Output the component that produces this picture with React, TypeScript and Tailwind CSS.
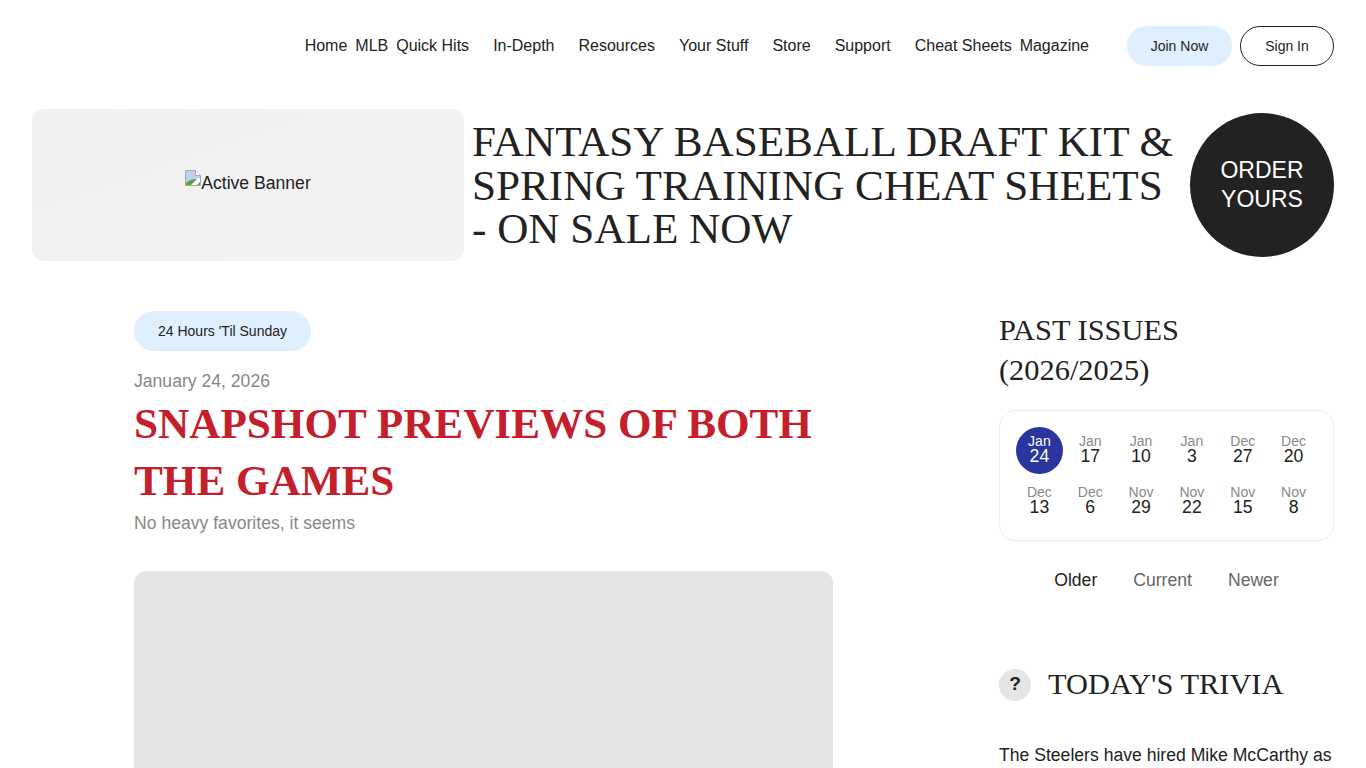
import React from 'react';

const sans = { fontFamily: '"Liberation Sans", Arial, sans-serif' };

const navItems = [
  { label: 'Home', cls: '' },
  { label: 'MLB', cls: '' },
  { label: 'Quick Hits', cls: 'pr-4' },
  { label: 'In-Depth', cls: 'pr-4' },
  { label: 'Resources', cls: 'pr-4' },
  { label: 'Your Stuff', cls: 'pr-4' },
  { label: 'Store', cls: 'pr-4' },
  { label: 'Support', cls: 'pr-4' },
  { label: 'Cheat Sheets', cls: '' },
  { label: 'Magazine', cls: '' },
];

const issues = [
  ['Jan', '24'],
  ['Jan', '17'],
  ['Jan', '10'],
  ['Jan', '3'],
  ['Dec', '27'],
  ['Dec', '20'],
  ['Dec', '13'],
  ['Dec', '6'],
  ['Nov', '29'],
  ['Nov', '22'],
  ['Nov', '15'],
  ['Nov', '8'],
];

// the browser's broken image glyph
const BrokenImage = () => (
  <svg width="16" height="16" viewBox="0 0 16 16" className="inline-block align-[3px]">
    <path d="M0.5 0.5H10.5L15.5 5.5V15.5H0.5Z" fill="#fff" stroke="#a8a8a8" />
    <path d="M10.5 0.5V5.5H15.5" fill="#fff" stroke="#a8a8a8" />
    <path d="M1 1H10V6H15V8.5C10 8 5 9 1 13Z" fill="#bcd0f4" />
    <path d="M1 15V13C4 10 8 8.5 12 9L6 15Z" fill="#5f9e3c" />
    <path d="M12 15L15 12V15Z" fill="#5f9e3c" />
  </svg>
);

export default function App() {
  return (
    <div className="h-[768px] overflow-hidden bg-white text-[#222]" style={sans}>
      {/* Header */}
      <header className="flex items-center justify-end gap-[38px] px-8 pt-[26px]">
        <nav className="flex items-center gap-2">
          {navItems.map((item) => (
            <a key={item.label} className={`text-base text-[#222] ${item.cls}`}>
              {item.label}
            </a>
          ))}
        </nav>
        <div className="flex items-center gap-2">
          <button className="h-10 w-[105px] rounded-full bg-[#e0effd] text-sm text-[#222]">Join Now</button>
          <button className="h-10 w-[94px] rounded-full border border-[#222] text-sm text-[#222]">Sign In</button>
        </div>
      </header>

      {/* Banner */}
      <section className="mt-[43px] flex items-center px-8">
        <div className="flex h-[152px] w-[432px] shrink-0 items-center justify-center rounded-xl bg-gradient-to-br from-[#f0f0f0] to-[#f3f3f3] pb-1 text-[17.6px]">
          <span>
            <BrokenImage />
            Active Banner
          </span>
        </div>
        <h2 className="ml-2 w-[710px] shrink-0 pt-px font-['Liberation_Serif',serif] text-[43.2px] leading-[43.5px] text-[#222]">
          FANTASY BASEBALL DRAFT KIT &amp; SPRING TRAINING CHEAT SHEETS - ON SALE NOW
        </h2>
        <a className="ml-auto flex size-36 shrink-0 items-center justify-center rounded-full bg-[#222] text-center text-[23px] leading-[29px] text-white">
          ORDER
          <br />
          YOURS
        </a>
      </section>

      {/* Main */}
      <div className="mt-[50px] flex pl-[134px] pr-8">
        <main className="w-[699px] shrink-0">
          <span className="inline-flex h-10 w-[177px] items-center justify-center rounded-full bg-[#e0effd] text-sm text-[#222]">
            24 Hours 'Til Sunday
          </span>
          <p className="mt-[9px] text-[17.6px] leading-[42px] text-[#888]">January 24, 2026</p>
          <h1 className="-mt-[6px] font-['Liberation_Serif',serif] text-[43.2px] leading-[56.5px] font-bold text-[#c4202b]">
            SNAPSHOT PREVIEWS OF BOTH THE GAMES
          </h1>
          <p className="pt-px text-[17.6px] leading-[27px] text-[#888]">No heavy favorites, it seems</p>
          <div className="mt-[34px] h-[400px] rounded-xl bg-[#e5e5e5]" />
        </main>

        <aside className="-mt-px ml-auto w-[335px] shrink-0">
          <h3 className="font-['Liberation_Serif',serif] text-[30.4px] leading-10 text-[#222]">
            PAST ISSUES (2026/2025)
          </h3>
          <div className="mt-5 rounded-2xl border border-[#eee] px-[14px] pt-4 pb-[15px]">
            <div className="grid grid-cols-6 gap-y-1">
              {issues.map(([month, day], i) => (
                <a
                  key={`${month}${day}`}
                  className={`flex size-[47px] flex-col items-center justify-center justify-self-center rounded-full pb-1 ${
                    i === 0 ? 'bg-[#2a359f] text-white' : ''
                  }`}
                >
                  <span className={`text-sm leading-[14px] ${i === 0 ? 'text-white' : 'text-[#888]'}`}>{month}</span>
                  <span className={`text-[17.6px] leading-[16px] ${i === 0 ? 'text-white' : 'text-[#222]'}`}>{day}</span>
                </a>
              ))}
            </div>
          </div>
          <div className="mt-[26px] flex justify-center gap-9 text-[17.6px] leading-[27px] text-[#666]">
            <a className="text-[#222]">Older</a>
            <a>Current</a>
            <a>Newer</a>
          </div>
          <div className="mt-[70px] flex items-center gap-[17px]">
            <span className="flex size-8 items-center justify-center rounded-full bg-[#e5e5e5] text-[19.2px] font-bold">?</span>
            <h3 className="pb-px font-['Liberation_Serif',serif] text-[30.4px] leading-10 text-[#222]">TODAY'S TRIVIA</h3>
          </div>
          <p className="mt-[37px] text-[17.6px] leading-[27px] text-[#222]">
            The Steelers have hired Mike McCarthy as their next head coach.
          </p>
        </aside>
      </div>
    </div>
  );
}
